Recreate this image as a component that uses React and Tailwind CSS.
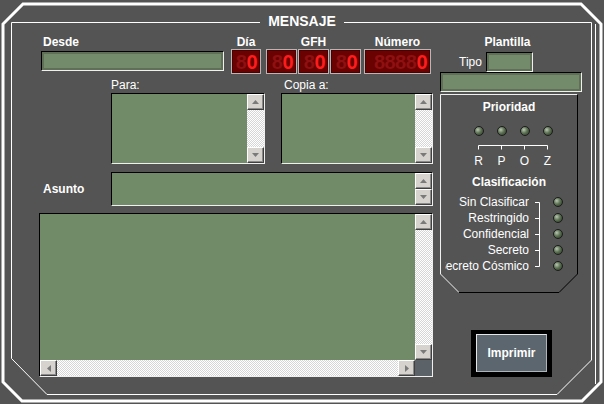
import React from "react";

const sunken = "border border-t-black border-l-black border-b-[#f0f0f0] border-r-[#f0f0f0]";
const checker = "bg-[image:repeating-conic-gradient(#ffffff_0_25%,#d6d6d6_0_50%)] bg-[length:2px_2px]";
const led = "w-[10px] h-[10px] rounded-full border border-[#1c1c1c] bg-[image:radial-gradient(circle_at_35%_35%,#b9c6b0_0%,#5d7255_45%,#27331f_100%)]";

function Arrow({ dir }) {
    if (dir === "up") return <svg width="7" height="4"><path d="M3.5 0L7 4H0Z" fill="#7a7a7a" /></svg>;
    if (dir === "down") return <svg width="7" height="4"><path d="M0 0H7L3.5 4Z" fill="#7a7a7a" /></svg>;
    if (dir === "left") return <svg width="4" height="7"><path d="M0 3.5L4 0V7Z" fill="#7a7a7a" /></svg>;
    return <svg width="4" height="7"><path d="M0 0L4 3.5L0 7Z" fill="#7a7a7a" /></svg>;
}

function ScrollBtn({ dir }) {
    return (
        <div className="w-[17px] h-[16px] shrink-0 flex items-center justify-center bg-[#d6d3ce] border border-t-white border-l-white border-b-[#404040] border-r-[#404040] shadow-[inset_-1px_-1px_0_#8a8a8a]">
            <Arrow dir={dir} />
        </div>
    );
}

function VScroll({ track = true }) {
    return (
        <div className={`w-[17px] flex flex-col ${checker}`}>
            <ScrollBtn dir="up" />
            {track ? <div className="flex-1" /> : null}
            <ScrollBtn dir="down" />
        </div>
    );
}

function TextBox({ className, track = true }) {
    return (
        <div className={`${sunken} bg-[#718a68] flex ${className}`}>
            <div className="flex-1" />
            <VScroll track={track} />
        </div>
    );
}

function FramedInput({ className }) {
    return (
        <div className={`${sunken} bg-[#5f7057] p-[2px] ${className}`}>
            <div className="h-full bg-[#738b6a]" />
        </div>
    );
}

function Digits({ ghost, className }) {
    return (
        <div className={`h-[25px] border border-[#b7b7b7] bg-[#4e0000] p-[1px] ${className}`}>
            <div className="h-full bg-[#6a0202] flex items-center justify-end pr-[2px] font-bold text-[20px] leading-none tracking-[-0.5px]">
                <span className="text-[#8e1010]">{ghost}</span>
                <span className="text-[#ff1c1c]">0</span>
            </div>
        </div>
    );
}

function Frame() {
    return (
        <svg className="absolute inset-0 pointer-events-none" width="604" height="404">
            <polygon points="23,4 581,4 601,24 601,382 582,401 22,401 3,382 3,24" fill="none" stroke="#ffffff" strokeWidth="3" />
            <path d="M260 22.5H11.5V358.5L47 394.5H557L591.5 360V22.5H344" fill="none" stroke="#ffffff" strokeWidth="1" />
            <path d="M595.5 24V384" fill="none" stroke="#ffffff" strokeWidth="1" />
        </svg>
    );
}

function Prioridad() {
    const rows = ["Sin Clasificar", "Restringido", "Confidencial", "Secreto", "Secreto Cósmico"];
    return (
        <div className="relative mt-[2px] w-[138px] h-[199px] pt-[6px]">
            <svg className="absolute inset-0 pointer-events-none" width="138" height="199">
                <path d="M19 198.5L0.5 180V0.5H137.5" fill="none" stroke="#f0f0f0" strokeWidth="1" />
                <path d="M137.5 0.5V180L119 198.5H19" fill="none" stroke="#000000" strokeWidth="1" />
            </svg>
            <div className="h-[14px] leading-[14px] text-center font-bold">Prioridad</div>
            <div className="mt-[12px] ml-[27px] grid grid-cols-[repeat(4,23px)]">
                {[0, 1, 2, 3].map(i => <div key={i} className={`${led} mx-auto`} />)}
            </div>
            <svg className="mt-[9px] ml-[27px] block" width="92" height="5">
                <path d="M11.5 4.5V0.5H80.5V4.5M34.5 0.5V4.5M57.5 0.5V4.5" fill="none" stroke="#ffffff" strokeWidth="1" />
            </svg>
            <div className="mt-[4px] ml-[27px] grid grid-cols-[repeat(4,23px)] h-[14px] leading-[14px] text-center">
                <span>R</span><span>P</span><span>O</span><span>Z</span>
            </div>
            <div className="mt-[7px] h-[14px] leading-[14px] text-center font-bold">Clasificación</div>
            <div className="mt-[5px] flex">
                <div className="ml-[5px] w-[84px] flex flex-col">
                    {rows.map(r => (
                        <div key={r} className="h-[16px] leading-[16px] flex justify-end overflow-hidden whitespace-nowrap">
                            <span className="shrink-0">{r}</span>
                        </div>
                    ))}
                </div>
                <svg className="ml-[6px] block" width="5" height="80">
                    <path d="M4.5 8.5V72.5M0 8.5H4.5M0 24.5H4.5M0 40.5H4.5M0 56.5H4.5M0 72.5H4.5" fill="none" stroke="#ffffff" strokeWidth="1" />
                </svg>
                <div className="ml-[13px] flex flex-col">
                    {rows.map(r => (
                        <div key={r} className="h-[16px] flex items-center"><div className={led} /></div>
                    ))}
                </div>
            </div>
        </div>
    );
}

export default function App() {
    return (
        <div className="relative w-[604px] h-[404px] overflow-hidden bg-[#545454] font-['Liberation_Sans',Arial,sans-serif] text-[12px] text-white">
            <Frame />
            <div className="absolute left-0 right-0 top-[13px] text-center text-[14px] font-bold leading-[16px]">MENSAJE</div>

            <div className="flex pl-[39px] pt-[35px] gap-[7px]">
                <div className="w-[394px] flex flex-col">
                    <div className="flex h-[39px]">
                        <div className="ml-[2px] w-[183px] flex flex-col">
                            <div className="h-[16px] leading-[14px] pl-[2px] font-bold">Desde</div>
                            <FramedInput className="h-[20px]" />
                        </div>
                        <div className="ml-[7px] flex items-end">
                            <div className="w-[30px] flex flex-col">
                                <div className="h-[14px] leading-[14px] text-center font-bold">Día</div>
                                <Digits ghost="8" className="w-[30px]" />
                            </div>
                            <div className="ml-[5px] flex flex-col">
                                <div className="h-[14px] leading-[14px] text-center font-bold">GFH</div>
                                <div className="flex gap-[1px]">
                                    <Digits ghost="8" className="w-[31px]" />
                                    <Digits ghost="8" className="w-[31px]" />
                                    <Digits ghost="8" className="w-[31px]" />
                                </div>
                            </div>
                            <div className="ml-[3px] w-[67px] flex flex-col">
                                <div className="h-[14px] leading-[14px] text-center font-bold">Número</div>
                                <Digits ghost="8888" className="w-[67px]" />
                            </div>
                        </div>
                    </div>

                    <div className="mt-[4px] flex">
                        <div className="ml-[72px] w-[154px]">
                            <div className="h-[15px] leading-[14px]">Para:</div>
                            <TextBox className="h-[71px]" />
                        </div>
                        <div className="ml-[16px] w-[152px]">
                            <div className="h-[15px] leading-[14px] pl-[3px]">Copia a:</div>
                            <TextBox className="h-[71px]" />
                        </div>
                    </div>

                    <div className="mt-[8px] flex items-center h-[34px]">
                        <div className="w-[72px] pl-[4px] font-bold">Asunto</div>
                        <TextBox className="w-[322px] h-[34px]" track={false} />
                    </div>

                    <div className={`mt-[7px] h-[164px] ${sunken} bg-[#718a68] flex flex-col`}>
                        <div className="flex-1 flex">
                            <div className="flex-1" />
                            <VScroll />
                        </div>
                        <div className={`h-[16px] flex ${checker}`}>
                            <ScrollBtn dir="left" />
                            <div className="flex-1" />
                            <ScrollBtn dir="right" />
                            <div className="w-[17px] bg-[#5b6369]" />
                        </div>
                    </div>
                </div>

                <div className="w-[142px] flex flex-col">
                    <div className="h-[14px] leading-[14px] text-center font-bold pr-[7px]">Plantilla</div>
                    <div className="mt-[3px] h-[20px] flex items-center gap-[4px] pl-[19px]">
                        <span>Tipo</span>
                        <FramedInput className="w-[47px] h-[20px]" />
                    </div>
                    <FramedInput className="w-[142px] h-[20px]" />
                    <Prioridad />
                    <div className="mt-[37px] ml-[31px] w-[81px] h-[47px] bg-black pt-[4px] px-[5px] pb-[5px]">
                        <div className="h-full bg-[#5c666e] border border-t-[#e6e6e6] border-l-[#e6e6e6] border-b-[#aeb4b8] border-r-[#aeb4b8] flex items-center justify-center font-bold">
                            Imprimir
                        </div>
                    </div>
                </div>
            </div>
        </div>
    );
}
